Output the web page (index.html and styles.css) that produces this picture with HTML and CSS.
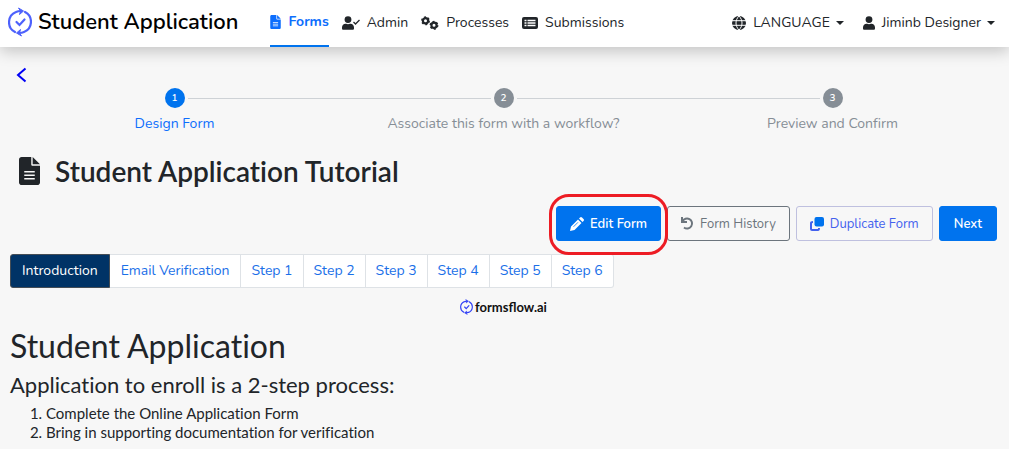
FILE: index.html
```html
<!DOCTYPE html>
<html lang="en">
<head>
<meta charset="utf-8">
<meta name="viewport" content="width=device-width, initial-scale=1">
<title>Student Application</title>
<link rel="stylesheet" href="styles.css">
</head>
<body>
<svg class="defs" width="0" height="0" aria-hidden="true">
  <symbol id="doc" viewBox="0 0 384 512"><path fill="currentColor" fill-rule="evenodd" d="M224 136V0H48C22 0 0 22 0 48v416c0 26 22 48 48 48h288c26 0 48-22 48-48V160H248c-13 0-24-11-24-24zM250 0v134h134zM96 256h192v28H96zm0 64h192v28H96zm0 64h192v28H96z"/></symbol>
  <symbol id="user" viewBox="0 0 448 512"><path fill="currentColor" d="M224 256a128 128 0 1 0 0-256 128 128 0 0 0 0 256zm90 32h-17a174 174 0 0 1-146 0h-17C60 288 0 348 0 422v42c0 26 22 48 48 48h352c26 0 48-22 48-48v-42c0-74-60-134-134-134z"/></symbol>
  <symbol id="flow" viewBox="0 0 24 30"><g fill="none" stroke="currentColor" stroke-width="2.200" stroke-linecap="round"><path d="M7 25A11 11 0 0 1 8 5Q10 4 13 4M17 5a11 11 0 0 1-1 20Q14 26 11 26"/><path d="M8.500 15l3 3 5-5.500"/></g><path fill="currentColor" stroke="currentColor" stroke-linejoin="round" d="M10.500 1l5 3-4 3.500 1-3.500zM13.500 29L8.500 26l4-3.500-1 3.500z"/></symbol>
</svg>
<header class="topbar">
  <a class="brand" href="#"><svg class="brand-logo"><use href="#flow"/></svg>Student Application</a>
  <nav class="menu" aria-label="Main">
    <a class="menu-link active" href="#"><svg width="11" height="14"><use href="#doc"/></svg>Forms</a>
    <a class="menu-link" href="#"><svg width="18" height="14" viewBox="0 0 18 14"><use href="#user" width="12" height="14"/><path d="M11.500 6l2 2 4-4" fill="none" stroke="currentColor" stroke-width="1.300"/></svg>Admin</a>
    <a class="menu-link" href="#"><svg width="18" height="14" viewBox="0 0 18 14" fill="none" stroke="currentColor"><circle cx="4.500" cy="4.800" r="2.600" stroke-width="2.200"/><circle cx="4.500" cy="4.800" r="3.700" stroke-width="1.500" stroke-dasharray="2 1.874"/><circle cx="13" cy="9.300" r="2.600" stroke-width="2.200"/><circle cx="13" cy="9.300" r="3.700" stroke-width="1.500" stroke-dasharray="2 1.874"/></svg>Processes</a>
    <a class="menu-link" href="#"><svg width="16" height="14" viewBox="0 0 16 14"><rect y="1" width="16" height="12" rx="2" fill="currentColor"/><path d="M2.500 4.500h2m1 0h8M2.500 7h2m1 0h8M2.500 9.500h2m1 0h8" stroke="#fff" stroke-width="1.300"/></svg>Submissions</a>
  </nav>
  <div class="account">
    <button class="menu-button" type="button"><svg width="14" height="14" viewBox="0 0 14 14"><circle cx="7" cy="7" r="7" fill="currentColor"/><path d="M0 4.700h14M0 9.300h14M7 0C3 4 3 10 7 14M7 0c4 4 4 10 0 14" fill="none" stroke="#fff"/></svg>LANGUAGE<span class="caret"></span></button>
    <button class="menu-button" type="button"><svg width="12" height="14"><use href="#user"/></svg>Jiminb Designer<span class="caret"></span></button>
  </div>
</header>
<main class="page">
  <a class="back" href="#" aria-label="Back"><svg width="11" height="16" viewBox="0 0 11 16"><path d="M9.500 1.500L2 8l7.500 6.500" fill="none" stroke="currentColor" stroke-width="2"/></svg></a>
  <ol class="stepper">
    <li class="step current"><span class="step-number">1</span><span class="step-label">Design Form</span></li>
    <li class="step"><span class="step-number">2</span><span class="step-label">Associate this form with a workflow?</span></li>
    <li class="step"><span class="step-number">3</span><span class="step-label">Preview and Confirm</span></li>
  </ol>
  <h1 class="title"><svg width="21" height="28"><use href="#doc"/></svg>Student Application Tutorial</h1>
  <div class="actions">
    <span class="highlight"><button class="btn primary" type="button"><svg width="14" height="14" viewBox="0 0 14 14" fill="currentColor"><path d="M8 2.500L11.500 6 4.500 13 0 14l1-4.500zM9 1.500l1-1q1-1 2 0l1.500 1.500q1 1 0 2l-1 1z"/><path d="M3.500 9.800L8 5.300" stroke="#0073ee" stroke-width=".8"/></svg>Edit Form</button></span>
    <button class="btn outline" type="button"><svg width="13" height="13" viewBox="0 0 13 13" fill="none" stroke="currentColor" stroke-width="2"><path d="M1 0v5h5M1.500 4.500A5 5 0 1 1 3 10.500"/></svg>Form History</button>
    <button class="btn soft" type="button"><svg width="14" height="14" viewBox="0 0 14 14"><rect x="4.500" width="9.500" height="9.500" rx="2" fill="#0073ee"/><path d="M3 5Q1 5 1 6v6q0 1 1 1h6q1 0 1-2" fill="none" stroke="#4361ee" stroke-width="2"/></svg>Duplicate Form</button>
    <button class="btn primary next" type="button">Next</button>
  </div>
  <nav class="tabs" aria-label="Form pages">
    <a class="tab named selected" href="#">Introduction</a><a class="tab named" href="#">Email Verification</a><a class="tab" href="#">Step 1</a><a class="tab" href="#">Step 2</a><a class="tab" href="#">Step 3</a><a class="tab" href="#">Step 4</a><a class="tab" href="#">Step 5</a><a class="tab" href="#">Step 6</a>
  </nav>
  <div class="form-logo"><svg width="13" height="16"><use href="#flow"/></svg>formsflow.ai</div>
  <section class="intro">
    <h2>Student Application</h2>
    <h3>Application to enroll is a 2-step process:</h3>
    <ol>
      <li>Complete the Online Application Form</li>
      <li>Bring in supporting documentation for verification</li>
    </ol>
  </section>
</main>
</body>
</html>
```
FILE: styles.css
```css
* { box-sizing: border-box; }
body {
  margin: 0;
  background: #f7f7f7;
  color: #212529;
  font: 14px/20px Nunito, "Open Sans", sans-serif;
  font-variant-ligatures: none;
}
a { color: inherit; text-decoration: none; }
button { font: inherit; cursor: pointer; }
svg { flex: none; }
.defs { position: absolute; }

.topbar {
  display: flex;
  height: 47px;
  padding: 0 14px 0 8px;
  background: #fff;
  box-shadow: 0 4px 16px rgba(0, 0, 0, .22);
  white-space: nowrap;
}
.brand {
  display: flex;
  align-items: center;
  gap: 6px;
  padding-bottom: 4px;
  color: #000;
  font-size: 22px;
  font-weight: 600;
}
.brand-logo { width: 24px; height: 30px; color: #4d61fc; }
.menu { display: flex; gap: 13px; margin-left: 32px; }
.menu-link, .menu-button {
  display: flex;
  align-items: center;
  gap: 7px;
  padding: 0 0 2px;
}
.menu-link.active {
  border-bottom: 2px solid #0073ee;
  color: #0d6efd;
  font-weight: 700;
}
.account { display: flex; gap: 19px; margin-left: auto; }
.menu-button { border: 0; background: none; color: #212529; }
.caret {
  border: 4px solid transparent;
  border-top-color: currentColor;
  border-bottom: 0;
  margin-left: -1px;
}

.page { padding: 20px 12px 8px 10px; }
.back { display: flex; width: 24px; padding-left: 6px; color: #0000f5; }
.stepper {
  display: flex;
  margin: 5px 0 0;
  padding: 0;
  list-style: none;
  color: #868e96;
}
.step {
  position: relative;
  display: flex;
  flex: 1;
  flex-direction: column;
  align-items: center;
  gap: 6px;
}
.step:not(:last-child)::after {
  content: "";
  position: absolute;
  top: 10px;
  left: calc(50% + 13px);
  width: calc(100% - 26px);
  border-top: 1px solid #ced2d6;
}
.step-number {
  width: 20px;
  height: 20px;
  border-radius: 50%;
  background: #868e96;
  color: #fff;
  font-size: 10px;
  font-weight: 600;
  text-align: center;
}
.step.current { color: #0d6efd; }
.current .step-number { background: #0073ee; }

.title {
  display: flex;
  align-items: center;
  gap: 15px;
  margin: 20px 0 0;
  padding-left: 9px;
  font: 600 28px/34px Lato, sans-serif;
  font-variant-ligatures: none;
}
.actions {
  display: flex;
  justify-content: flex-end;
  gap: 6px;
  margin-top: 18px;
}
.btn {
  display: flex;
  align-items: center;
  gap: 6px;
  height: 35px;
  padding: 0 13px;
  border: 1px solid #0073ee;
  border-radius: 3px;
  font-size: 13px;
  white-space: nowrap;
}
.btn.primary { background: #0073ee; color: #fff; font-weight: 600; }
.btn.next { padding: 0 14px; }
.btn.outline { border-color: #6c757d; background: none; color: #6c757d; }
.btn.soft { border-color: #bfc0df; background: none; color: #4361ee; }
.highlight { position: relative; }
.highlight::after {
  content: "";
  position: absolute;
  inset: -12px -7px -14px;
  border: 3px solid #ed1c24;
  border-radius: 20px;
  pointer-events: none;
}

.tabs { display: flex; margin-top: 13px; }
.tab {
  min-width: 62px;
  padding: 6px 10px;
  border: 1px solid #dee2e6;
  border-left-width: 0;
  background: #fff;
  color: #1a6fe8;
  text-align: center;
  white-space: nowrap;
}
.tab.named { padding: 6px 11px; }
.tab:first-child { border-radius: 3px 0 0 3px; }
.tab:last-child { border-radius: 0 3px 3px 0; }
.tab.selected { border-color: #454d55; border-left-width: 1px; background: #036; color: #fff; }
.form-logo {
  display: flex;
  align-items: center;
  justify-content: center;
  gap: 2px;
  margin-top: 9px;
  color: #111;
  font: 700 13px/20px Lato, sans-serif;
}
.form-logo svg { color: #3342f5; }
.intro { font: 15px/19px Lato, sans-serif; font-variant-ligatures: none; }
.intro h2 { margin: 9px 0 6px; font-size: 32px; font-weight: 400; line-height: 40px; }
.intro h3 { margin: 0 0 6px; font-size: 22px; font-weight: 400; line-height: 26px; }
.intro ol { margin: 0; padding-left: 36px; }
```
